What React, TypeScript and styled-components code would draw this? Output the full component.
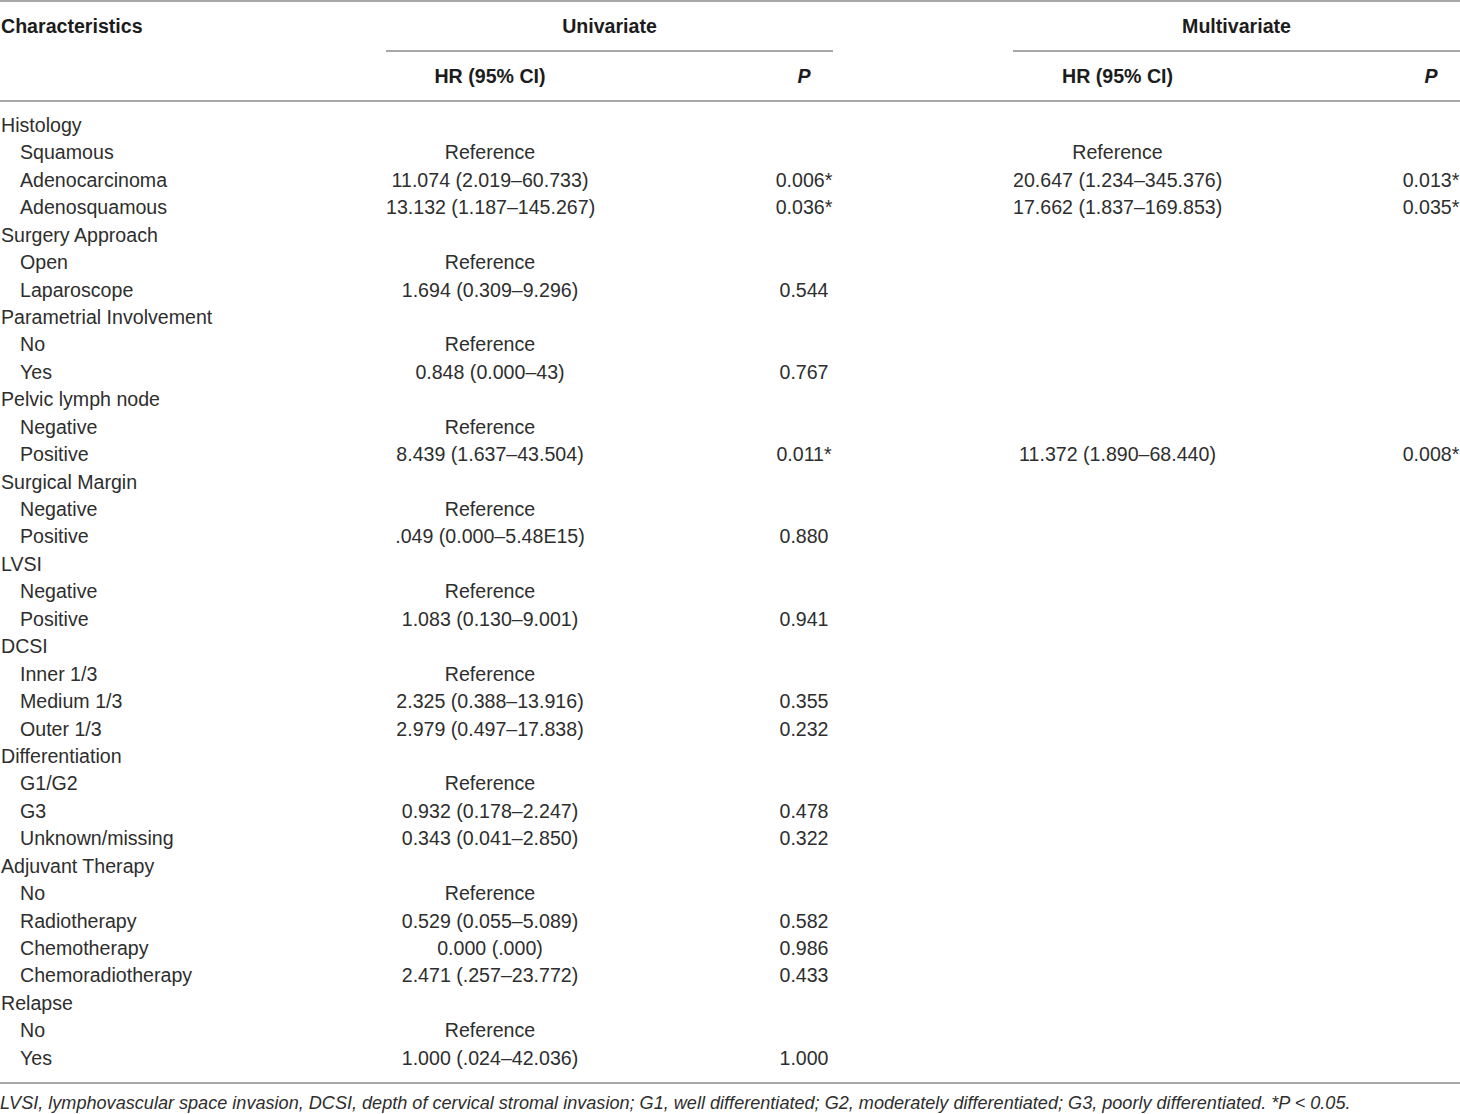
import styled, { createGlobalStyle } from 'styled-components'

const GlobalStyle = createGlobalStyle`
    html, body {
        margin: 0;
        padding: 0;
        background: #ffffff;
    }
    body {
        font-family: "Liberation Sans", Arial, Helvetica, sans-serif;
        color: #2e2e2e;
    }
`

const RULE = '#a8a8a8'

const Page = styled.div`
    width: 1460px;
`

const Table = styled.table`
    width: 1460px;
    table-layout: fixed;
    border-collapse: separate;
    border-spacing: 0;
    border-top: 2px solid ${RULE};
    font-size: 19.6px;

    tbody tr:first-child td {
        padding-top: 10px;
    }
    tbody tr:last-child td {
        padding-bottom: 10px;
        border-bottom: 2px solid ${RULE};
    }
`

const HeadCell = styled.th<{ $align?: 'left' | 'center'; $rule?: boolean; $italic?: boolean }>`
    box-sizing: border-box;
    height: 50px;
    padding: 0 0 0 ${(p) => (p.$align === 'left' ? '1px' : '0')};
    vertical-align: middle;
    text-align: ${(p) => p.$align ?? 'center'};
    font-weight: 700;
    font-style: ${(p) => (p.$italic ? 'italic' : 'normal')};
    color: #1c1c1c;
    white-space: nowrap;
    border-bottom: 2px solid ${(p) => (p.$rule ? RULE : 'transparent')};
`

const Cell = styled.td<{ $align?: 'left' | 'center'; $indent?: boolean }>`
    height: 27.44px;
    padding: 0 0 0 ${(p) => (p.$indent ? '20px' : p.$align === 'left' ? '1px' : '0')};
    vertical-align: middle;
    text-align: ${(p) => p.$align ?? 'center'};
    white-space: nowrap;
    line-height: 1;
`

const Footnote = styled.p`
    margin: 0;
    padding-top: 9px;
    font-size: 18.1px;
    line-height: 20px;
    font-style: italic;
    color: #2e2e2e;
    white-space: nowrap;
`

type Item = [string, string?, string?, string?, string?]

interface Group {
    title: string
    items: Item[]
}

const groups: Group[] = [
    {
        title: 'Histology',
        items: [
            ['Squamous', 'Reference', '', 'Reference', ''],
            ['Adenocarcinoma', '11.074 (2.019–60.733)', '0.006*', '20.647 (1.234–345.376)', '0.013*'],
            ['Adenosquamous', '13.132 (1.187–145.267)', '0.036*', '17.662 (1.837–169.853)', '0.035*'],
        ],
    },
    {
        title: 'Surgery Approach',
        items: [
            ['Open', 'Reference'],
            ['Laparoscope', '1.694 (0.309–9.296)', '0.544'],
        ],
    },
    {
        title: 'Parametrial Involvement',
        items: [
            ['No', 'Reference'],
            ['Yes', '0.848 (0.000–43)', '0.767'],
        ],
    },
    {
        title: 'Pelvic lymph node',
        items: [
            ['Negative', 'Reference'],
            ['Positive', '8.439 (1.637–43.504)', '0.011*', '11.372 (1.890–68.440)', '0.008*'],
        ],
    },
    {
        title: 'Surgical Margin',
        items: [
            ['Negative', 'Reference'],
            ['Positive', '.049 (0.000–5.48E15)', '0.880'],
        ],
    },
    {
        title: 'LVSI',
        items: [
            ['Negative', 'Reference'],
            ['Positive', '1.083 (0.130–9.001)', '0.941'],
        ],
    },
    {
        title: 'DCSI',
        items: [
            ['Inner 1/3', 'Reference'],
            ['Medium 1/3', '2.325 (0.388–13.916)', '0.355'],
            ['Outer 1/3', '2.979 (0.497–17.838)', '0.232'],
        ],
    },
    {
        title: 'Differentiation',
        items: [
            ['G1/G2', 'Reference'],
            ['G3', '0.932 (0.178–2.247)', '0.478'],
            ['Unknown/missing', '0.343 (0.041–2.850)', '0.322'],
        ],
    },
    {
        title: 'Adjuvant Therapy',
        items: [
            ['No', 'Reference'],
            ['Radiotherapy', '0.529 (0.055–5.089)', '0.582'],
            ['Chemotherapy', '0.000 (.000)', '0.986'],
            ['Chemoradiotherapy', '2.471 (.257–23.772)', '0.433'],
        ],
    },
    {
        title: 'Relapse',
        items: [
            ['No', 'Reference'],
            ['Yes', '1.000 (.024–42.036)', '1.000'],
        ],
    },
]

const widths = [386, 208, 181, 58, 180, 209, 180, 58]

function App(): JSX.Element {
    return (
        <Page>
            <GlobalStyle />
            <Table>
                <colgroup>
                    {widths.map((w, i) => (
                        <col key={i} style={{ width: w }} />
                    ))}
                </colgroup>
                <thead>
                    <tr>
                        <HeadCell $align="left">Characteristics</HeadCell>
                        <HeadCell colSpan={3} $rule>
                            Univariate
                        </HeadCell>
                        <HeadCell />
                        <HeadCell colSpan={3} $rule>
                            Multivariate
                        </HeadCell>
                    </tr>
                    <tr>
                        <HeadCell $rule />
                        <HeadCell $rule>HR (95% CI)</HeadCell>
                        <HeadCell $rule />
                        <HeadCell $rule $italic>
                            P
                        </HeadCell>
                        <HeadCell $rule />
                        <HeadCell $rule>HR (95% CI)</HeadCell>
                        <HeadCell $rule />
                        <HeadCell $rule $italic>
                            P
                        </HeadCell>
                    </tr>
                </thead>
                <tbody>
                    {groups.map((g) => [
                        <tr key={g.title}>
                            <Cell $align="left">{g.title}</Cell>
                            <Cell colSpan={7} />
                        </tr>,
                        ...g.items.map((it, i) => (
                            <tr key={`${g.title}-${i}`}>
                                <Cell $align="left" $indent>
                                    {it[0]}
                                </Cell>
                                <Cell>{it[1]}</Cell>
                                <Cell />
                                <Cell>{it[2]}</Cell>
                                <Cell />
                                <Cell>{it[3]}</Cell>
                                <Cell />
                                <Cell>{it[4]}</Cell>
                            </tr>
                        )),
                    ])}
                </tbody>
            </Table>
            <Footnote>
                LVSI, lymphovascular space invasion, DCSI, depth of cervical stromal invasion; G1, well
                differentiated; G2, moderately differentiated; G3, poorly differentiated. *P &lt; 0.05.
            </Footnote>
        </Page>
    )
}

export default App
